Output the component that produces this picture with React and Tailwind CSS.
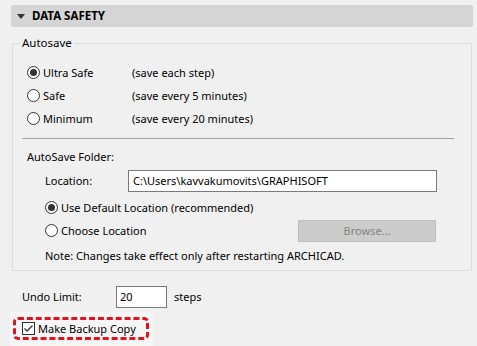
import React from 'react';

const Radio = ({ checked }) => (
  <svg width="13" height="13" viewBox="0 0 13 13" className="shrink-0">
    <circle cx="6.5" cy="6.5" r="6" fill="#ffffff" stroke="#333333" strokeWidth="1" />
    {checked && <circle cx="6.5" cy="6.5" r="3.5" fill="#333333" />}
  </svg>
);

const Checkbox = () => (
  <svg width="13" height="13" viewBox="0 0 13 13" className="shrink-0">
    <rect x="0.5" y="0.5" width="12" height="12" fill="#ffffff" stroke="#333333" strokeWidth="1" />
    <path d="M2.5 6.5 L5 9 L10.5 3.5" fill="none" stroke="#333333" strokeWidth="1.3" />
  </svg>
);

const RadioRow = ({ checked, label, hint }) => (
  <div className="flex h-[23px] items-center">
    <div className="flex w-[119px] items-center gap-[3px] pl-[14px]">
      <Radio checked={checked} />
      <span>{label}</span>
    </div>
    <span>{hint}</span>
  </div>
);

export default function App() {
  return (
    <div
      className="h-[346px] w-[477px] overflow-hidden bg-[#f0f0f0] pt-[5px] text-[11px] leading-[16px] text-black"
      style={{ fontFamily: '"Noto Sans", "Open Sans", sans-serif' }}
    >
      {/* Section header */}
      <div className="ml-[11px] flex h-[22px] w-[462px] items-center gap-[7px] rounded-[3px] bg-[#d5d5d5] pl-[6px]">
        <svg width="8" height="5" viewBox="0 0 8 5">
          <path d="M0 0 H8 L4 5 Z" fill="#333333" />
        </svg>
        <span className="text-[11.5px] font-bold">DATA SAFETY</span>
      </div>

      {/* Autosave group */}
      <fieldset className="ml-[12px] mt-[8px] w-[460px] border border-[#dcdcdc] pb-[6px]">
        <legend className="ml-[7px] px-[2px] text-[11.5px]">Autosave</legend>
        <div className="mt-[10px]">
          <RadioRow checked label="Ultra Safe" hint="(save each step)" />
          <RadioRow label="Safe" hint="(save every 5 minutes)" />
          <RadioRow label="Minimum" hint="(save every 20 minutes)" />
        </div>

        <div className="ml-[9px] mr-[17px] mt-[8px] h-px bg-[#a0a0a0]" />

        <div className="ml-[14px] mt-[10px] h-[16px]">AutoSave Folder:</div>

        <div className="mt-[5px] flex items-center pl-[32px]">
          <span className="w-[83px]">Location:</span>
          <div className="flex h-[22px] w-[309px] items-center border border-[#7a7a7a] bg-white px-[4px]">
            C:\Users\kavvakumovits\GRAPHISOFT
          </div>
        </div>

        <div className="mt-[4px] flex h-[23px] items-center gap-[3px] pl-[32px]">
          <Radio checked />
          <span>Use Default Location (recommended)</span>
        </div>
        <div className="flex h-[23px] items-center pl-[32px] pr-[35px]">
          <div className="flex items-center gap-[3px]">
            <Radio />
            <span>Choose Location</span>
          </div>
          <div className="ml-auto flex h-[22px] w-[138px] items-center justify-center border border-[#bfbfbf] bg-[#cccccc] text-[#838383]">
            Browse...
          </div>
        </div>

        <div className="mt-[6px] h-[16px] pl-[32px]">
          Note: Changes take effect only after restarting ARCHICAD.
        </div>
      </fieldset>

      {/* Undo limit */}
      <div className="mt-[15px] flex items-center pl-[22px]">
        <span className="w-[94px]">Undo Limit:</span>
        <div className="flex h-[22px] w-[51px] items-center border border-[#7a7a7a] bg-white px-[3px]">20</div>
        <span className="ml-[7px]">steps</span>
      </div>

      {/* Backup copy */}
      <div className="ml-[10px] mt-[4px] w-[143px] bg-[#f6f6f6] px-[3px] pt-[5px] pb-[6px]">
        <div className="flex h-[23px] w-[136px] items-center gap-[3px] rounded-[5px] border-[3px] border-dashed border-[#e3111b] pl-[6px]">
          <Checkbox />
          <span>Make Backup Copy</span>
        </div>
      </div>
    </div>
  );
}
